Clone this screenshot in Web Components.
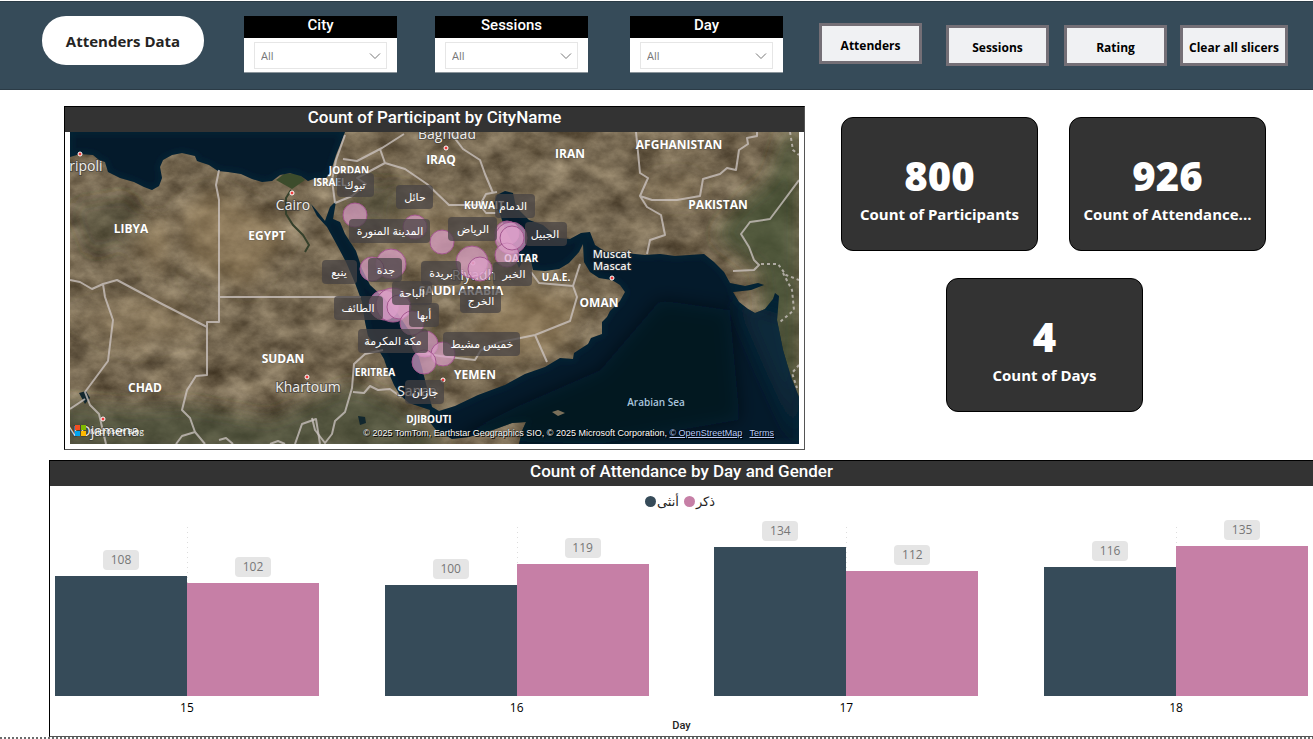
<!DOCTYPE html>
<html lang="en">
<head>
<meta charset="utf-8">
<title>Attenders Data</title>
<style>
  body { margin: 0; background: #fff; font-family: "Open Sans", "Noto Sans", "DejaVu Sans", sans-serif; color: #252423; }
</style>
</head>
<body>
<attendance-report></attendance-report>

<template id="t-report">
  <style>
    :host { display: block; overflow: hidden; }
    header {
      display: grid; align-items: start; box-sizing: border-box; height: 89px; margin-top: 1px; padding-top: 14px;
      background: #364b59; border-top: 1px solid #2b3b46; border-bottom: 1px solid #2b3b46;
      grid-template-columns: 42fr 162fr 40fr 153fr 38fr 153fr 42fr 153fr 36fr 103fr 24fr 103fr 15fr 103fr 13fr 108fr 25fr;
    }
    header > * { min-width: 0; }
    h1 {
      grid-column: 2; margin: 0; height: 49px; line-height: 51px; border-radius: 24px; background: #fff;
      text-align: center; font-size: 15px; font-weight: 700; white-space: nowrap;
    }
    slicer-box:nth-of-type(1) { grid-column: 4; }
    slicer-box:nth-of-type(2) { grid-column: 6; }
    slicer-box:nth-of-type(3) { grid-column: 8; }
    nav-button { margin-top: 9px; }
    nav-button:nth-of-type(1) { grid-column: 10; margin-top: 7px; }
    nav-button:nth-of-type(2) { grid-column: 12; }
    nav-button:nth-of-type(3) { grid-column: 14; }
    nav-button:nth-of-type(4) { grid-column: 16; }
    .top { display: grid; grid-template-columns: 64fr 741fr 36fr 425fr 47fr; margin-top: 16px; align-items: start; }
    .top > visual-card { grid-column: 2; }
    .kpis { grid-column: 4; display: grid; grid-template-columns: 105fr 92fr 31fr 74fr 123fr; row-gap: 27px; margin-top: 11px; }
    kpi-card { min-width: 0; }
    kpi-card:nth-child(1) { grid-column: 1 / 3; }
    kpi-card:nth-child(2) { grid-column: 4 / 6; }
    kpi-card:nth-child(3) { grid-column: 2 / 5; }
    .bottom { margin: 10px -1px 0 49px; }
    footer { height: 2px; background: repeating-linear-gradient(90deg, #6b6b6b 0 2px, #fff 2px 4px); }
  </style>
  <header>
    <h1>Attenders Data</h1>
    <slicer-box label="City"></slicer-box>
    <slicer-box label="Sessions"></slicer-box>
    <slicer-box label="Day"></slicer-box>
    <nav-button>Attenders</nav-button>
    <nav-button>Sessions</nav-button>
    <nav-button>Rating</nav-button>
    <nav-button>Clear all slicers</nav-button>
  </header>
  <section class="top">
    <visual-card heading="Count of Participant by CityName"><city-map></city-map></visual-card>
    <div class="kpis">
      <kpi-card value="800">Count of Participants</kpi-card>
      <kpi-card value="926">Count of Attendance...</kpi-card>
      <kpi-card value="4">Count of Days</kpi-card>
    </div>
  </section>
  <visual-card class="bottom" heading="Count of Attendance by Day and Gender"><day-chart></day-chart></visual-card>
  <footer></footer>
</template>

<template id="t-slicer">
  <style>
    :host { display: block; background: #fff; height: 57px; box-sizing: border-box; border-bottom: 1px solid #8b959c; }
    label { display: block; height: 22px; background: #000; color: #fff; text-align: center; font: 500 15px/18px Roboto, sans-serif; }
    .box { position: relative; margin: 4px 10px 0; }
    select {
      display: block; width: 100%; height: 27px; box-sizing: border-box; padding: 0 6px; appearance: none; border: 1px solid #e6e6e6; border-radius: 0;
      background: #fff; color: #777; font: 11px "Open Sans", sans-serif;
    }
    svg { position: absolute; right: 6px; top: 10px; width: 12px; height: 8px; pointer-events: none; }
  </style>
  <label for="s"></label>
  <div class="box">
    <select id="s"><option>All</option></select>
    <svg viewBox="0 0 12 8" fill="none" stroke="#777" aria-hidden="true"><path d="M1 1.500l5 5 5-5"/></svg>
  </div>
</template>

<template id="t-button">
  <style>
    :host { display: block; }
    button {
      display: block; width: 100%; height: 41px; box-sizing: border-box; padding: 3px 0 0; background: #f0f1f3; color: #000;
      border: 3px solid #746f76; border-radius: 0; white-space: nowrap; font: 700 12px "Open Sans", sans-serif;
    }
  </style>
  <button type="button"><slot></slot></button>
</template>

<template id="t-card">
  <style>
    :host { display: block; min-width: 0; }
    section { border: 1px solid #000; border-right-color: #555; border-bottom-color: #555; background: #fff; }
    h2 { margin: 0; height: 25px; background: #333; color: #fff; text-align: center; font: 500 17px/21px Roboto, sans-serif; }
    div { padding: 0 5px 5px; }
  </style>
  <section><h2></h2><div><slot></slot></div></section>
</template>

<template id="t-kpi">
  <style>
    :host {
      display: flex; flex-direction: column; align-items: center; height: 134px; box-sizing: border-box; padding: 31px 8px 0;
      border: 1px solid #000; border-radius: 12px; background: #333; color: #fff; font-weight: 700; white-space: nowrap;
    }
    b { font-size: 40px; line-height: 53px; }
    span { font-size: 15px; line-height: 24px; }
  </style>
  <b></b><span><slot></slot></span>
</template>

<template id="t-chart">
  <style>
    :host { display: block; font-size: 12px; }
    ul { display: flex; justify-content: center; gap: 5px; margin: 0; padding: 5px 3px 0 0; list-style: none; font-size: 13px; line-height: 20px; color: #252423; }
    li { display: flex; align-items: center; gap: 1px; height: 20px; }
    i { width: 11px; height: 11px; border-radius: 50%; background: #364b59; }
    i.m { background: #c67fa6; }
    .plot { display: flex; gap: 5.25%; margin-top: 16px; }
    .group { flex: 1; min-width: 0; text-align: center; }
    .bars { position: relative; display: flex; height: 169px; }
    .bars::before { content: ""; position: absolute; left: 50%; top: 0; bottom: 0; width: 1px; background: repeating-linear-gradient(#ddd 0 1px, transparent 1px 5px); }
    .col { position: relative; flex: 1; display: flex; flex-direction: column; justify-content: flex-end; align-items: center; }
    .col span { flex: none; width: 36px; height: 20px; margin-bottom: 6px; border-radius: 4px; background: #e5e5e5; color: #777; line-height: 20px; }
    .bar { flex: none; width: 100%; background: #364b59; }
    .m .bar { background: #c67fa6; }
    .day { line-height: 24px; color: #000; }
    .axis { margin: 0; text-align: center; font: 500 11px/11px Roboto, sans-serif; }
  </style>
  <ul><li><i></i>أنثى</li><li><i class="m"></i>ذكر</li></ul>
  <div class="plot"></div>
  <p class="axis">Day</p>
</template>

<template id="t-map">
  <style>
    :host { display: block; position: relative; overflow: hidden; }
    svg { display: block; width: 100%; aspect-ratio: 729 / 312; }
    .border { fill: none; stroke: #cfc7c4; stroke-opacity: .75; stroke-width: 2; stroke-linejoin: round; }
    text { text-anchor: middle; fill: #fff; }
    .country { font: 700 12px "Open Sans", sans-serif; paint-order: stroke; stroke: #444; stroke-width: 1px; stroke-opacity: .4; }
    .small { font-size: 10px; }
    .town { font: 14px "Open Sans", sans-serif; fill: #eee; paint-order: stroke; stroke: #333; stroke-width: 2px; stroke-opacity: .5; }
    .port { font-size: 11px; font-weight: 600; }
    .sea { font: 600 10px "Open Sans", sans-serif; fill: #a9c5dd; }
    .city { font: 11px "Noto Sans", "DejaVu Sans", sans-serif; }
    .tag { fill: #454142; fill-opacity: .72; }
    .bubbles circle { fill: #dfa0cb; fill-opacity: .68; stroke: #a3578f; }
    .dots circle { fill: #ef3b3b; stroke: #fff; }
    .credits { position: absolute; right: 25px; bottom: 4px; font: 9px/14px "Liberation Sans", sans-serif; color: #fff; text-shadow: 0 0 1px #000, 1px 1px 0 #000; white-space: pre; }
    .credits a { color: #b9cdfb; }
    .bing { position: absolute; left: 5px; bottom: 8px; display: flex; align-items: center; gap: 4px; color: #fff; font: 8px/11px "Open Sans", sans-serif; }
    .bing svg { width: 11px; height: 11px; }
  </style>
  <svg class="map" viewBox="70 132 729 312" preserveAspectRatio="xMidYMid slice" role="img" aria-label="Participants by city">
    <defs>
      <filter id="terrain" x="0" y="0" width="100%" height="100%" color-interpolation-filters="sRGB">
        <feTurbulence type="fractalNoise" baseFrequency=".035 .05" numOctaves="7" seed="21"/>
        <feColorMatrix values=".45 .1 0 0 .19  .43 .1 0 0 .145  .38 .1 0 0 .08  0 0 0 0 1"/>
      </filter>
      <filter id="soft" x="-30%" y="-30%" width="160%" height="160%"><feGaussianBlur stdDeviation="9"/></filter>
      <filter id="shelf" x="-5%" y="-5%" width="110%" height="110%"><feGaussianBlur stdDeviation="3"/></filter>
      <path id="water" d="M70 132V157L80 154 93 155 99 160 105 162 108 172 120 178 134 182 144 187 152 190 159 186 162 178 160 167 163 160 172 155 182 153 195 156 197 161 209 165 218 171 228 172 241 174 252 179 262 182 272 181 280 175 290 173 301 176 308 181 316 178 326 178 331 171 336 155 342 140 345 132Z
        M306 194L311 204 317 211 325 221 330 207 336 201 333 219 340 222 345 234 356 251 362 269 370 285 383 297 398 314 410 332 416 347 422 368 427 388 432 407 439 411 455 406 478 395 505 385 525 374 545 367 560 358 573 359 574 353 588 344 591 338 602 334 602 322 607 317 610 311 620 301 625 292 620 285 612 280 599 278 590 272 584 262 583 244 579 252 569 263 559 269 545 271 533 270 531 261 526 255 519 268 515 258 513 244 505 229 500 214 494 204 497 195 505 191 513 193 516 207 529 220 543 225 558 238 570 239 581 233 590 232 595 245 606 252 625 253 645 255 660 254 675 256 704 254 714 262 724 272 730 283 745 286 758 283 764 285 751 290 733 292 739 302 748 309 755 313 765 309 773 299 775 293 779 296 777 320 783 350 791 377 799 397V444H519L522 431 526 422 512 423 493 430 469 437 452 439 436 430 429 421 430 410 421 407 409 403 400 395 394 385 388 371 384 359 378 349 368 336 365 322 362 302 355 283 346 262 337 245 327 227 317 216Z"/>
      <clipPath id="wet"><use href="#water"/></clipPath>
    </defs>
    <rect x="70" y="132" width="729" height="312" filter="url(#terrain)"/>
    <g filter="url(#soft)">
      <path fill="#3d4d2c" fill-opacity=".7" d="M799 132V444L770 380 760 270 735 250 715 235 745 200 770 180 785 132Z"/>
      <path fill="#3d4a30" fill-opacity=".6" d="M60 455V402L130 408 190 405 270 420 350 385 390 400 430 430 450 455Z"/>
      <path fill="#a68a62" fill-opacity=".4" d="M465 330L520 285 585 300 560 350 500 360Z M180 210L215 190 290 230 250 290 190 260Z M130 230L170 220 160 280Z"/>
      <path fill="#b59a72" fill-opacity=".25" d="M400 190L500 230 470 290 390 260Z M70 315L160 290 200 330 130 350Z M655 178h40v22h-40Z"/>
      <path fill="#35402e" fill-opacity=".35" d="M70 205l60-10 20 40-60 20Z M345 180l60 5 15 30-60 10Z M395 315l30 10 15 60-12 10Z"/>
    </g>
    <path fill="#3c4c2c" d="M276 180L284 174 298 173 305 180 292 189Z"/>
    <use href="#water" fill="#041a2b"/>
    <g clip-path="url(#wet)">
      <use href="#water" fill="none" stroke="#14465a" stroke-width="5" stroke-opacity=".25" filter="url(#shelf)"/>
      <path d="M735 300L799 320V444L765 370Z" fill="#0c3140" fill-opacity=".65" filter="url(#soft)"/>
      <path d="M450 440L520 405 600 370 660 300 730 310 740 420 600 444Z" fill="#010d19" fill-opacity=".5" filter="url(#soft)"/>
    </g>
    <path fill="#7b705a" d="M552 412L558 410 565 413 558 416Z"/>
    <path d="M291 190L286 198 286 214 293 225 303 235 309 245 305 252" fill="none" stroke="#35402b" stroke-width="2"/>
    <path fill="#12272e" d="M79 393l7 -2 4 7 -5 6z M358 416l7 1 1 6 -6 2z"/>
    <g class="border">
      <path d="M219 170L216 185 219 200V322H207V375L196 376 187 390 182 410 190 418 195 432 205 444M219 297H361M207 327L162 304 117 280 103 284 92 289 80 282 70 280M103 284L105 297 113 320 108 361 85 392 90 405 99 414 106 444M85 399L70 409M195 432L182 436 176 444M295 444L302 424 316 419 320 444M219 440L226 438 233 444M270 444L278 441 285 444"/>
      <path d="M383 350L365 354 354 364 352 388 345 412 335 421 332 434 325 443 315 430 312 418M353 392L364 393 370 386 378 390 390 389 401 397M418 352L440 356 475 360 481 350 500 342 535 335 570 321 577 297 573 286 539 283 531 272M535 335L547 362M573 286L580 264"/>
      <path d="M335 203L352 196 366 184 357 178 385 163 380 149M343 159L357 161 382 148 404 134M385 163L405 169 427 184 449 205 480 205 486 194 497 192M480 205L486 213 496 213M450 132L463 149 480 160 485 174 493 193M335 203L332 180 336 160 345 135"/>
      <path d="M636 132L640 173 648 178 640 196 652 200 677 200 700 196 703 179 720 174 727 168 736 170 739 150 748 144 747 138 757 136V132M640 196L647 207 661 215 665 235 650 240 647 254M799 180L782 203 770 219 750 222 741 234 749 247 754 260 759 265 754 270 733 271"/>
      <path stroke-dasharray="3 3" d="M790 132L793 150 799 155M761 264L778 264 786 275 799 280M783 273L792 290 794 310 780 322M799 365L792 373 797 388"/>
    </g>
    <g class="dots">
      <circle cx="80" cy="154" r="2"/><circle cx="292" cy="193" r="2"/><circle cx="446" cy="148" r="2"/><circle cx="307" cy="377" r="2"/>
      <circle cx="612" cy="278" r="2"/><circle cx="443" cy="380" r="2"/><circle cx="103" cy="419" r="2"/><circle cx="473" cy="263" r="2"/>
    </g>
    <g id="places"></g>
    <g class="bubbles" id="bubbles"></g>
    <g id="tags"></g>
  </svg>
  <div class="bing"><svg viewBox="0 0 11 11" aria-hidden="true"><path fill="#f25022" d="M0 0h5v5H0z"/><path fill="#7fba00" d="M6 0h5v5H6z"/><path fill="#00a4ef" d="M0 6h5v5H0z"/><path fill="#ffb900" d="M6 6h5v5H6z"/></svg>Microsoft Bing</div>
  <div class="credits">© 2025 TomTom, Earthstar Geographics SIO, © 2025 Microsoft Corporation, <a href="#osm">© OpenStreetMap</a>   <a href="#terms">Terms</a></div>
</template>

<script>
  const stamp = (host, id) => {
    const root = host.attachShadow({ mode: 'open' });
    root.append(document.getElementById(id).content.cloneNode(true));
    return root;
  };

  customElements.define('slicer-box', class extends HTMLElement {
    connectedCallback() { stamp(this, 't-slicer').querySelector('label').textContent = this.getAttribute('label'); }
  });
  customElements.define('nav-button', class extends HTMLElement {
    connectedCallback() { stamp(this, 't-button'); }
  });
  customElements.define('visual-card', class extends HTMLElement {
    connectedCallback() { stamp(this, 't-card').querySelector('h2').textContent = this.getAttribute('heading'); }
  });
  customElements.define('kpi-card', class extends HTMLElement {
    connectedCallback() { stamp(this, 't-kpi').querySelector('b').textContent = this.getAttribute('value'); }
  });

  customElements.define('day-chart', class extends HTMLElement {
    connectedCallback() {
      const max = 152;
      const col = (v, cls) => `<div class="col ${cls}"><span>${v}</span><div class="bar" style="height:${Math.round(v / max * 1000) / 10}%"></div></div>`;
      stamp(this, 't-chart').querySelector('.plot').innerHTML =
        [[15, 108, 102], [16, 100, 119], [17, 134, 112], [18, 116, 135]]
          .map(([d, f, m]) => `<div class="group"><div class="bars">${col(f, 'f')}${col(m, 'm')}</div><div class="day">${d}</div></div>`).join('');
    }
  });

  customElements.define('city-map', class extends HTMLElement {
    connectedCallback() {
      const root = stamp(this, 't-map');
      // text, x, baseline y, classes
      const places = [
        ['LIBYA', 131, 233, 'country'], ['EGYPT', 267, 240, 'country'], ['SUDAN', 283, 363, 'country'], ['CHAD', 145, 392, 'country'],
        ['IRAQ', 441, 164, 'country'], ['IRAN', 570, 158, 'country'], ['AFGHANISTAN', 679, 149, 'country'], ['PAKISTAN', 718, 209, 'country'],
        ['OMAN', 599, 307, 'country'], ['YEMEN', 475, 379, 'country'], ['SAUDI ARABIA', 461, 295, 'country'],
        ['JORDAN', 349, 174, 'country small'], ['ISRAEL', 330, 186, 'country small'], ['KUWAIT', 484, 209, 'country small'],
        ['QATAR', 521, 262, 'country small'], ['U.A.E.', 556, 281, 'country small'], ['ERITREA', 375, 376, 'country small'], ['DJIBOUTI', 429, 423, 'country small'],
        ['Tripoli', 82, 171, 'town'], ['Cairo', 293, 210, 'town'], ['Baghdad', 447, 139, 'town'], ['Khartoum', 308, 392, 'town'],
        ['Riyadh', 474, 280, 'town'], ['Sanaa', 417, 396, 'town'], ["N'Djamena", 103, 436, 'town'],
        ['Muscat', 612, 258, 'town port'], ['Mascat', 612, 270, 'town port'], ['Arabian Sea', 656, 406, 'sea'],
      ];
      const bubbles = [
        [355, 215, 12], [415, 227, 12], [442, 242, 12], [391, 264, 15], [372, 269, 12], [472, 262, 16], [480, 269, 12],
        [507, 233, 12], [511, 238, 16], [507, 255, 12], [512, 238, 12], [384, 305, 15], [393, 305, 17], [399, 307, 12],
        [412, 323, 12], [425, 344, 13], [443, 354, 12], [424, 362, 12],
      ];
      // name, left, top, width, text centre
      const tags = [
        ['تبوك', 337, 173, 37, 355], ['حائل', 396, 185, 37, 415], ['المدينة المنورة', 349, 219, 81, 390], ['الرياض', 448, 217, 49, 473],
        ['الدمام', 495, 194, 40, 513], ['الجبيل', 525, 222, 42, 545], ['ينبع', 322, 260, 35, 339], ['جدة', 368, 258, 34, 386],
        ['بريدة', 421, 261, 40, 441], ['الخبر', 493, 262, 39, 514], ['الباحة', 392, 281, 40, 412], ['الطائف', 334, 296, 49, 358],
        ['أبها', 409, 303, 30, 424], ['الخرج', 460, 289, 41, 481], ['مكة المكرمة', 358, 329, 70, 393], ['خميس مشيط', 443, 332, 77, 482],
        ['جازان', 405, 380, 39, 425],
      ];
      root.getElementById('places').innerHTML = places.map(([t, x, y, c]) => `<text class="${c}" x="${x}" y="${y}">${t}</text>`).join('');
      root.getElementById('bubbles').innerHTML = bubbles.map(([x, y, r]) => `<circle cx="${x}" cy="${y}" r="${r}"/>`).join('');
      root.getElementById('tags').innerHTML = tags.map(([t, x, y, w, c]) =>
        `<rect class="tag" x="${x}" y="${y}" width="${w}" height="24" rx="4"/><text class="city" x="${c}" y="${y + 16}">${t}</text>`).join('');
    }
  });

  customElements.define('attendance-report', class extends HTMLElement {
    connectedCallback() { stamp(this, 't-report'); }
  });
</script>
</body>
</html>
